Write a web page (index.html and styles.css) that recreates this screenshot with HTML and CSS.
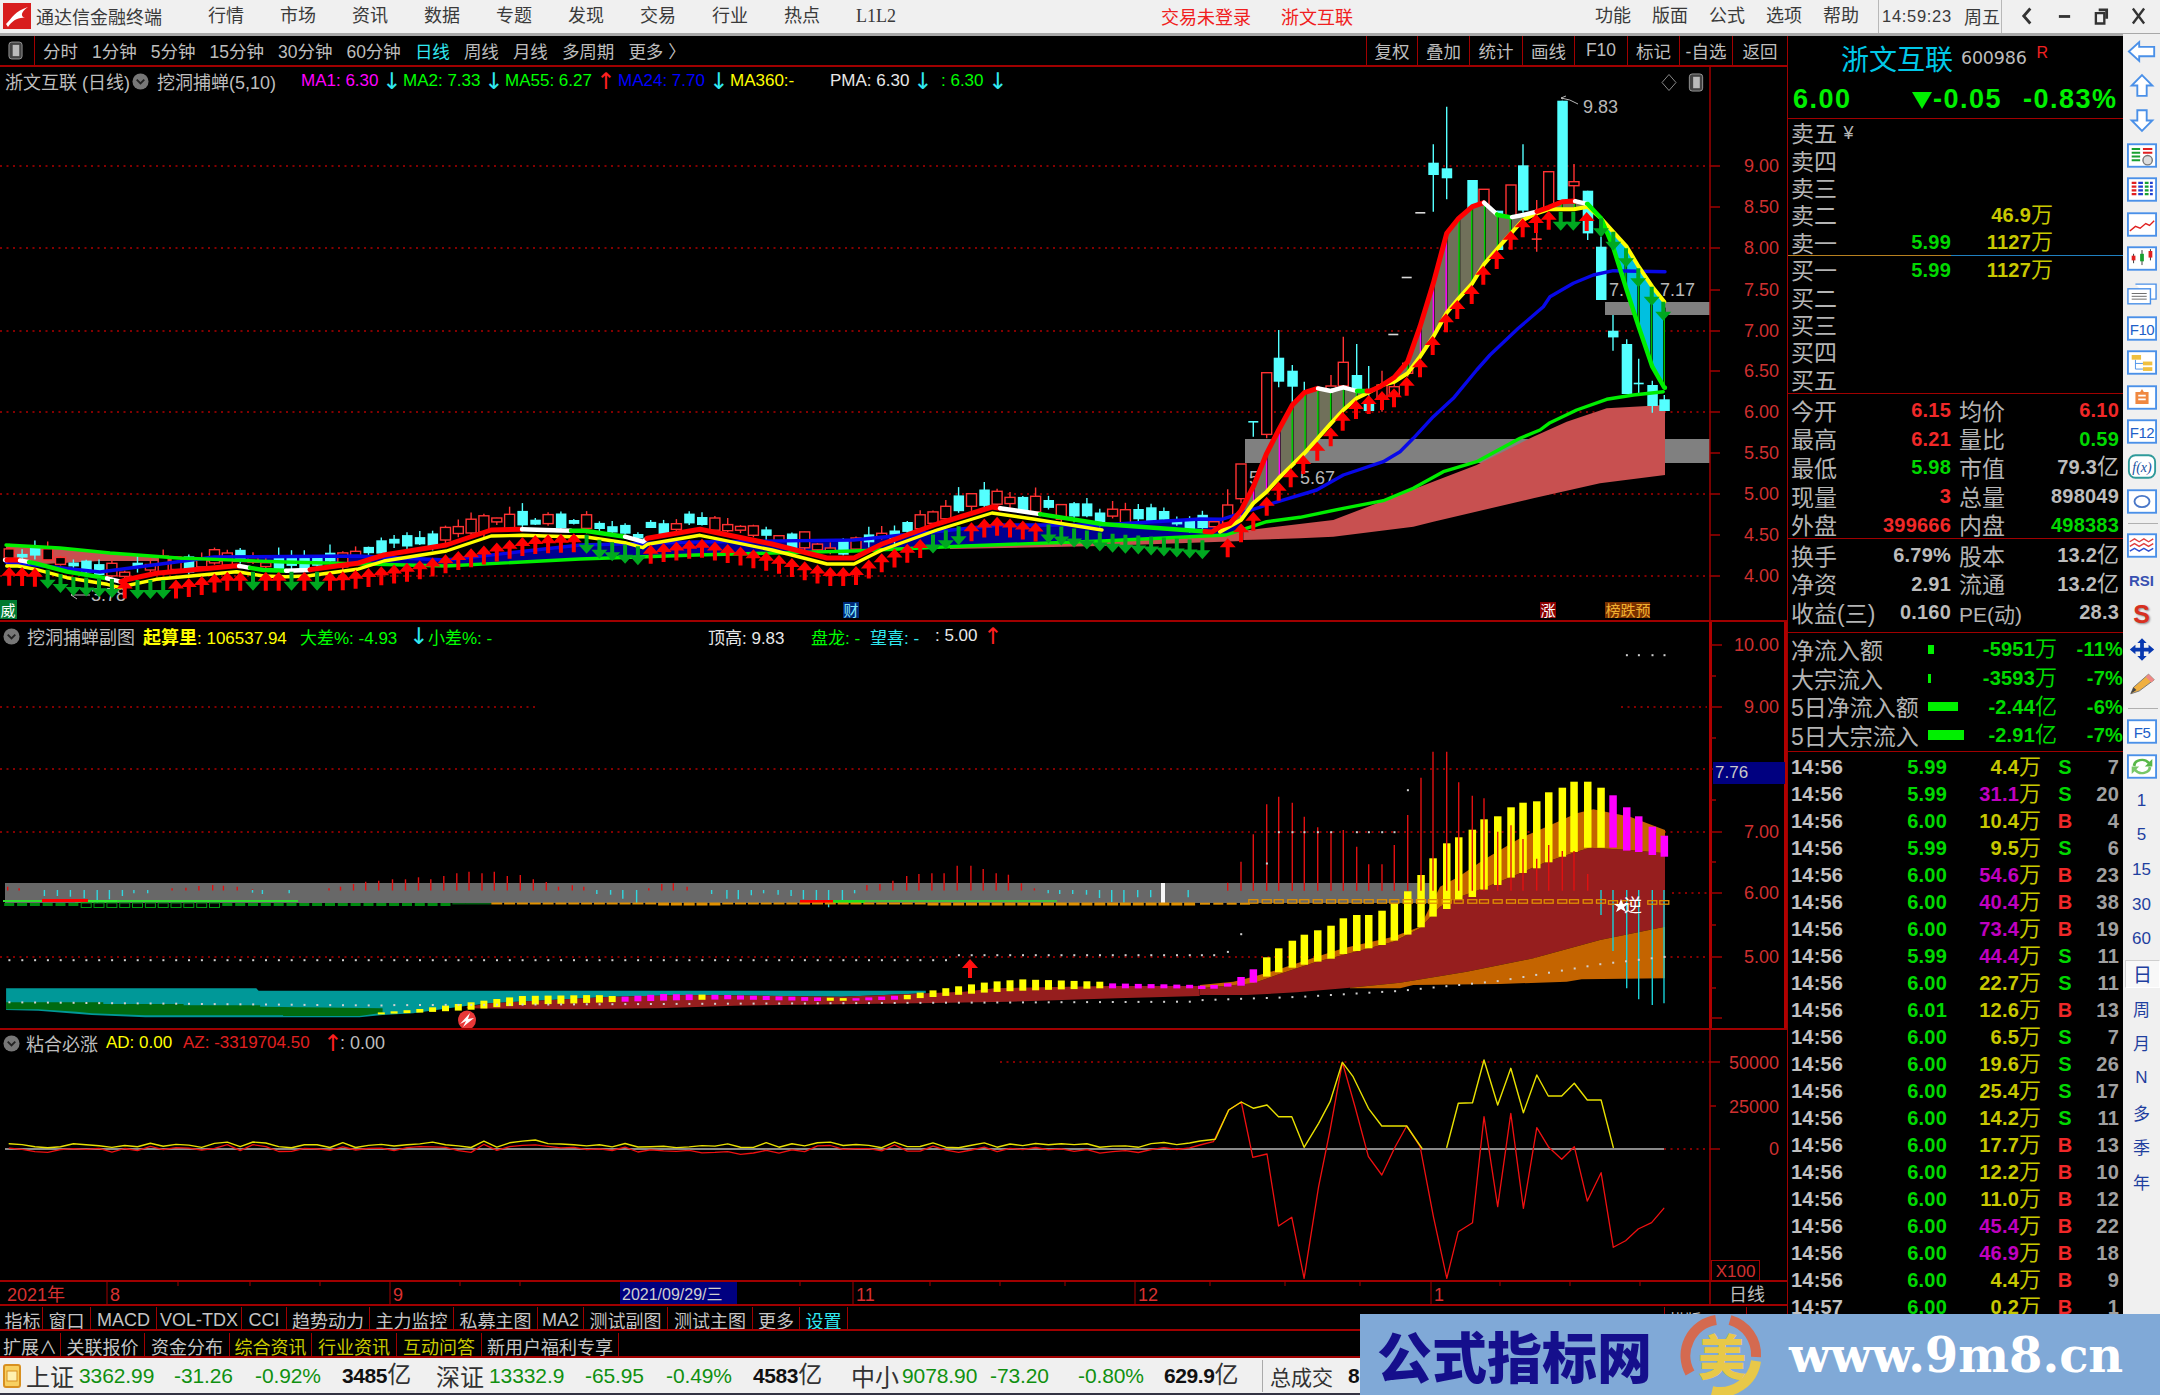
FILE: index.html
```html
<!DOCTYPE html>
<html lang="zh-CN">
<head>
<meta charset="utf-8">
<title>通达信金融终端</title>
<link rel="stylesheet" href="styles.css">
</head>
<body>
<div class="app">
  <header class="menubar">
    <svg class="app-logo" viewBox="0 0 28 26"><rect width="28" height="26" fill="#d81e1e"/><path d="M3 21 C9 15 12 8 25 4 C18 9 17 13 22 15 C15 14 9 18 5 24Z" fill="#fff"/></svg>
    <span class="app-name">通达信金融终端</span>
    <nav class="menu">
      <span>行情</span><span>市场</span><span>资讯</span><span>数据</span><span>专题</span><span>发现</span><span>交易</span><span>行业</span><span>热点</span><span class="l1l2">L1L2</span>
    </nav>
    <span class="alert alert-first">交易未登录</span>
    <span class="alert alert-second">浙文互联</span>
    <nav class="menu menu-right">
      <span>功能</span><span>版面</span><span>公式</span><span>选项</span><span>帮助</span>
    </nav>
    <div class="clock"><span class="clock-time">14:59:23</span><span>周五</span></div>
    <div class="winbtns">
      <svg viewBox="0 0 16 20"><path d="M11 2 L4 10 L11 18" fill="none" stroke="#333" stroke-width="3"/></svg>
      <svg viewBox="0 0 16 20"><rect x="2" y="9" width="12" height="3" fill="#333"/></svg>
      <svg viewBox="0 0 16 20"><path d="M5 2h10v11h-3V5H5z" fill="#333"/><path d="M2 7h9v11H2z" fill="none" stroke="#333" stroke-width="2.5"/></svg>
      <svg viewBox="0 0 16 20"><path d="M2 2 L14 18 M14 2 L2 18" stroke="#333" stroke-width="2.5"/></svg>
    </div>
  </header>

  <div class="workspace">
    <section class="charts">
      <div class="toolbar">
        <div class="tb-icon"><svg viewBox="0 0 16 20"><rect x="1" y="1" width="14" height="18" rx="3" fill="#444" stroke="#999"/><rect x="5" y="4" width="7" height="12" fill="#bbb"/></svg></div>
        <div class="periods">
          <span>分时</span><span>1分钟</span><span>5分钟</span><span>15分钟</span><span>30分钟</span><span>60分钟</span><span class="on">日线</span><span>周线</span><span>月线</span><span>多周期</span><span>更多 〉</span>
        </div>
        <div class="tools">
          <span>复权</span><span>叠加</span><span>统计</span><span>画线</span><span>F10</span><span>标记</span><span>-自选</span><span>返回</span>
        </div>
      </div>

      <div class="pane pane-main">
        <svg id="svg-main" class="chart" width="1787" height="553" viewBox="0 67 1787 553"></svg>
        <div class="legend legend-main">
          <span class="c-gray">浙文互联 (日线)</span>
          <svg class="chev" viewBox="0 0 18 18"><circle cx="9" cy="9" r="8.5" fill="#777"/><path d="M5 7 L9 11 L13 7" fill="none" stroke="#222" stroke-width="2"/></svg>
          <span class="c-gray">挖洞捕蝉(5,10)</span>
          <span class="c-mag">MA1: 6.30</span><i class="c-cyan">↓</i>
          <span class="c-green">MA2: 7.33</span><i class="c-cyan">↓</i>
          <span class="c-green">MA55: 6.27</span><i class="c-red">↑</i>
          <span class="c-blue">MA24: 7.70</span><i class="c-cyan">↓</i>
          <span class="c-yellow">MA360:-</span>
          <span class="c-white">PMA: 6.30</span><i class="c-cyan">↓</i>
          <span class="c-green">: 6.30</span><i class="c-cyan">↓</i>
        </div>
        <div class="corner-marks">
          <svg viewBox="0 0 16 18" class="mark"><path d="M8 1 L15 9 L8 17 L1 9Z" fill="none" stroke="#888"/></svg>
          <svg viewBox="0 0 16 20" class="mark"><rect x="1" y="1" width="14" height="18" rx="3" fill="#444" stroke="#999"/><rect x="5" y="4" width="7" height="12" fill="#bbb"/></svg>
        </div>
      </div>

      <div class="pane pane-sub1">
        <svg id="svg-sub1" class="chart" width="1787" height="406" viewBox="0 622 1787 406"></svg>
        <div class="legend legend-sub1">
          <svg class="chev" viewBox="0 0 18 18"><circle cx="9" cy="9" r="8.5" fill="#777"/><path d="M5 7 L9 11 L13 7" fill="none" stroke="#222" stroke-width="2"/></svg>
          <span class="c-gray">挖洞捕蝉副图</span>
          <span class="c-yellow"><b>起算里</b>: 106537.94</span>
          <span class="c-green">大差%: -4.93</span><i class="c-cyan">↓</i>
          <span class="c-green">小差%: -</span>
          <span class="c-white">顶高: 9.83</span>
          <span class="c-green">盘龙: -</span>
          <span class="c-cyan">望喜: -</span>
          <span class="c-white">: 5.00</span><i class="c-red">↑</i>
        </div>
        <div class="price-tag">7.76</div>
      </div>

      <div class="pane pane-sub2">
        <svg id="svg-sub2" class="chart" width="1787" height="250" viewBox="0 1030 1787 250"></svg>
        <div class="legend legend-sub2">
          <svg class="chev" viewBox="0 0 18 18"><circle cx="9" cy="9" r="8.5" fill="#777"/><path d="M5 7 L9 11 L13 7" fill="none" stroke="#222" stroke-width="2"/></svg>
          <span class="c-gray">粘合必涨</span>
          <span class="c-yellow">AD: 0.00</span>
          <span class="c-redtext">AZ: -3319704.50</span><i class="c-red">↑</i>
          <span class="c-gray">: 0.00</span>
        </div>
        <div class="x100">X100</div>
      </div>

      <div class="timeaxis">
        <svg id="svg-time" class="chart" width="1787" height="22" viewBox="0 1283 1787 22"></svg>
      </div>

      <div class="btnrow btnrow-a">
        <span class="pad"></span>
        <span>指标</span><span>窗口</span><span>MACD</span><span>VOL-TDX</span><span>CCI</span><span>趋势动力</span><span>主力监控</span><span>私募主图</span><span>MA2</span><span>测试副图</span><span>测试主图</span><span>更多</span><span class="c-cyan">设置</span>
        <span class="gapcell"></span>
        <span class="cell-hidden">横版</span>
      </div>
      <div class="btnrow btnrow-b">
        <span>扩展∧</span><span>关联报价</span><span>资金分布</span><span class="c-olive">综合资讯</span><span class="c-olive">行业资讯</span><span class="c-olive">互动问答</span><span>新用户福利专享</span>
      </div>
    </section>

    <aside class="quote">
      <div class="q-title">
        <span class="q-name">浙文互联</span><span class="q-code">600986</span><sup class="q-r">R</sup>
      </div>
      <div class="q-price">
        <span class="q-last">6.00</span><span class="q-tri"></span><span class="q-chg">-0.05</span><span class="q-pct">-0.83%</span>
      </div>

      <div class="book book-ask">
        <div class="brow"><span class="cjk">卖五 <em>¥</em></span><span></span><span></span></div>
        <div class="brow"><span class="cjk">卖四</span><span></span><span></span></div>
        <div class="brow"><span class="cjk">卖三</span><span></span><span></span></div>
        <div class="brow"><span class="cjk">卖二</span><span></span><span class="num c-qty">46.9<u>万</u></span></div>
        <div class="brow"><span class="cjk">卖一</span><span class="num c-up">5.99</span><span class="num c-qty">1127<u>万</u></span></div>
      </div>
      <div class="book-split"></div>
      <div class="book book-bid">
        <div class="brow"><span class="cjk">买一</span><span class="num c-up">5.99</span><span class="num c-qty">1127<u>万</u></span></div>
        <div class="brow"><span class="cjk">买二</span><span></span><span></span></div>
        <div class="brow"><span class="cjk">买三</span><span></span><span></span></div>
        <div class="brow"><span class="cjk">买四</span><span></span><span></span></div>
        <div class="brow"><span class="cjk">买五</span><span></span><span></span></div>
      </div>

      <div class="stats stats-a">
        <div class="srow"><div><span class="cjk">今开</span><span class="num c-dn">6.15</span></div><div><span class="cjk">均价</span><span class="num c-dn">6.10</span></div></div>
        <div class="srow"><div><span class="cjk">最高</span><span class="num c-dn">6.21</span></div><div><span class="cjk">量比</span><span class="num c-up">0.59</span></div></div>
        <div class="srow"><div><span class="cjk">最低</span><span class="num c-up">5.98</span></div><div><span class="cjk">市值</span><span class="num c-txt">79.3<u>亿</u></span></div></div>
        <div class="srow"><div><span class="cjk">现量</span><span class="num c-dn">3</span></div><div><span class="cjk">总量</span><span class="num c-txt">898049</span></div></div>
        <div class="srow"><div><span class="cjk">外盘</span><span class="num c-dn">399666</span></div><div><span class="cjk">内盘</span><span class="num c-up">498383</span></div></div>
      </div>
      <div class="stats stats-b">
        <div class="srow"><div><span class="cjk">换手</span><span class="num c-txt">6.79%</span></div><div><span class="cjk">股本</span><span class="num c-txt">13.2<u>亿</u></span></div></div>
        <div class="srow"><div><span class="cjk">净资</span><span class="num c-txt">2.91</span></div><div><span class="cjk">流通</span><span class="num c-txt">13.2<u>亿</u></span></div></div>
        <div class="srow"><div><span class="cjk">收益(三)</span><span class="num c-txt">0.160</span></div><div><span class="cjk cjk-pe">PE(动)</span><span class="num c-txt">28.3</span></div></div>
      </div>

      <div class="flows">
        <div class="frow"><span class="cjk">净流入额</span><i class="fbar fbar-a"></i><span class="num c-up">-5951<u>万</u></span><span class="num c-up">-11%</span></div>
        <div class="frow"><span class="cjk">大宗流入</span><i class="fbar fbar-b"></i><span class="num c-up">-3593<u>万</u></span><span class="num c-up">-7%</span></div>
        <div class="frow"><span class="cjk">5日净流入额</span><i class="fbar fbar-c"></i><span class="num c-up">-2.44<u>亿</u></span><span class="num c-up">-6%</span></div>
        <div class="frow"><span class="cjk">5日大宗流入</span><i class="fbar fbar-d"></i><span class="num c-up">-2.91<u>亿</u></span><span class="num c-up">-7%</span></div>
      </div>

      <div class="trades">
        <div class="trow"><span>14:56</span><span class="c-up">5.99</span><span class="c-qty">4.4<u>万</u></span><span class="c-up">S</span><span class="c-cnt">7</span></div>
        <div class="trow"><span>14:56</span><span class="c-up">5.99</span><span class="c-big">31.1<u class="c-qty">万</u></span><span class="c-up">S</span><span class="c-cnt">20</span></div>
        <div class="trow"><span>14:56</span><span class="c-up">6.00</span><span class="c-qty">10.4<u>万</u></span><span class="c-dn">B</span><span class="c-cnt">4</span></div>
        <div class="trow"><span>14:56</span><span class="c-up">5.99</span><span class="c-qty">9.5<u>万</u></span><span class="c-up">S</span><span class="c-cnt">6</span></div>
        <div class="trow"><span>14:56</span><span class="c-up">6.00</span><span class="c-big">54.6<u class="c-qty">万</u></span><span class="c-dn">B</span><span class="c-cnt">23</span></div>
        <div class="trow"><span>14:56</span><span class="c-up">6.00</span><span class="c-big">40.4<u class="c-qty">万</u></span><span class="c-dn">B</span><span class="c-cnt">38</span></div>
        <div class="trow"><span>14:56</span><span class="c-up">6.00</span><span class="c-big">73.4<u class="c-qty">万</u></span><span class="c-dn">B</span><span class="c-cnt">19</span></div>
        <div class="trow"><span>14:56</span><span class="c-up">5.99</span><span class="c-big">44.4<u class="c-qty">万</u></span><span class="c-up">S</span><span class="c-cnt">11</span></div>
        <div class="trow"><span>14:56</span><span class="c-up">6.00</span><span class="c-qty">22.7<u>万</u></span><span class="c-up">S</span><span class="c-cnt">11</span></div>
        <div class="trow"><span>14:56</span><span class="c-up">6.01</span><span class="c-qty">12.6<u>万</u></span><span class="c-dn">B</span><span class="c-cnt">13</span></div>
        <div class="trow"><span>14:56</span><span class="c-up">6.00</span><span class="c-qty">6.5<u>万</u></span><span class="c-up">S</span><span class="c-cnt">7</span></div>
        <div class="trow"><span>14:56</span><span class="c-up">6.00</span><span class="c-qty">19.6<u>万</u></span><span class="c-up">S</span><span class="c-cnt">26</span></div>
        <div class="trow"><span>14:56</span><span class="c-up">6.00</span><span class="c-qty">25.4<u>万</u></span><span class="c-up">S</span><span class="c-cnt">17</span></div>
        <div class="trow"><span>14:56</span><span class="c-up">6.00</span><span class="c-qty">14.2<u>万</u></span><span class="c-up">S</span><span class="c-cnt">11</span></div>
        <div class="trow"><span>14:56</span><span class="c-up">6.00</span><span class="c-qty">17.7<u>万</u></span><span class="c-dn">B</span><span class="c-cnt">13</span></div>
        <div class="trow"><span>14:56</span><span class="c-up">6.00</span><span class="c-qty">12.2<u>万</u></span><span class="c-dn">B</span><span class="c-cnt">10</span></div>
        <div class="trow"><span>14:56</span><span class="c-up">6.00</span><span class="c-qty">11.0<u>万</u></span><span class="c-dn">B</span><span class="c-cnt">12</span></div>
        <div class="trow"><span>14:56</span><span class="c-up">6.00</span><span class="c-big">45.4<u class="c-qty">万</u></span><span class="c-dn">B</span><span class="c-cnt">22</span></div>
        <div class="trow"><span>14:56</span><span class="c-up">6.00</span><span class="c-big">46.9<u class="c-qty">万</u></span><span class="c-dn">B</span><span class="c-cnt">18</span></div>
        <div class="trow"><span>14:56</span><span class="c-up">6.00</span><span class="c-qty">4.4<u>万</u></span><span class="c-dn">B</span><span class="c-cnt">9</span></div>
        <div class="trow"><span>14:57</span><span class="c-up">6.00</span><span class="c-qty">0.2<u>万</u></span><span class="c-dn">B</span><span class="c-cnt">1</span></div>
      </div>
    </aside>

    <aside class="side">
      <div class="si"><svg viewBox="0 0 32 26"><path d="M2 13 L13 3 V8 H29 V18 H13 V23Z" fill="#fff" stroke="#4a90e8" stroke-width="2"/></svg></div>
      <div class="si"><svg viewBox="0 0 32 26"><path d="M16 2 L27 13 H21 V24 H11 V13 H5Z" fill="#fff" stroke="#4a90e8" stroke-width="2"/></svg></div>
      <div class="si"><svg viewBox="0 0 32 26"><path d="M16 24 L27 13 H21 V2 H11 V13 H5Z" fill="#fff" stroke="#4a90e8" stroke-width="2"/></svg></div>
      <div class="si"><svg viewBox="0 0 32 26"><rect x="1" y="1" width="30" height="24" fill="#fff" stroke="#4a90e8" stroke-width="2"/><path d="M5 6h9M5 10h9M5 14h9M5 18h9" stroke="#18a030" stroke-width="2"/><path d="M17 6h10M17 10h10" stroke="#e02020" stroke-width="2"/><circle cx="22" cy="18" r="5" fill="#ddd" stroke="#777" stroke-width="1.5"/></svg></div>
      <div class="si"><svg viewBox="0 0 32 26"><rect x="1" y="1" width="30" height="24" fill="#fff" stroke="#4a90e8" stroke-width="2"/><path d="M5 6h5M5 10h5M5 14h5M5 18h5" stroke="#e02020" stroke-width="2.5"/><path d="M12 6h5M12 10h5M12 14h5M12 18h5" stroke="#2040d0" stroke-width="2.5"/><path d="M19 6h4M19 10h4M19 14h4M19 18h4" stroke="#18a030" stroke-width="2.5"/><path d="M24.500 6h3M24.500 10h3M24.500 14h3M24.500 18h3" stroke="#2040d0" stroke-width="2.5"/></svg></div>
      <div class="si"><svg viewBox="0 0 32 26"><rect x="1" y="1" width="30" height="24" fill="#fff" stroke="#4a90e8" stroke-width="2"/><path d="M3 20 L9 15 L14 17 L20 12 L24 14 L29 9" fill="none" stroke="#e02020" stroke-width="1.5"/></svg></div>
      <div class="si"><svg viewBox="0 0 32 26"><rect x="1" y="1" width="30" height="24" fill="#fff" stroke="#4a90e8" stroke-width="2"/><path d="M7 8v10M16 4v16M25 3v12" stroke="#333"/><rect x="5" y="10" width="4" height="5" fill="#e02020"/><rect x="14" y="8" width="4" height="8" fill="#18a030"/><rect x="23" y="5" width="4" height="7" fill="#e02020"/></svg></div>
      <div class="si"><svg viewBox="0 0 32 26"><path d="M9 3h22v16h-6" fill="#fff" stroke="#4a90e8" stroke-width="1.500"/><rect x="1" y="8" width="24" height="16" fill="#fff" stroke="#4a90e8" stroke-width="1.500"/><path d="M5 13h16M5 16h16M5 19h16" stroke="#666"/></svg></div>
      <div class="si"><svg viewBox="0 0 32 26"><rect x="1" y="1" width="30" height="24" fill="#fff" stroke="#4a90e8" stroke-width="2"/><text x="16" y="20" class="ic-f">F10</text></svg></div>
      <div class="si"><svg viewBox="0 0 32 26"><rect x="1" y="1" width="30" height="24" fill="#fff" stroke="#4a90e8" stroke-width="2"/><path d="M9 10v10h8M9 14h8" stroke="#4a90e8" fill="none"/><rect x="5" y="5" width="10" height="5" fill="#f0c040"/><rect x="17" y="12" width="10" height="4" fill="#f0c040"/><rect x="17" y="18" width="10" height="4" fill="#f0c040"/></svg></div>
      <div class="si"><svg viewBox="0 0 32 26"><rect x="1" y="1" width="30" height="24" fill="#fff" stroke="#4a90e8" stroke-width="2"/><path d="M9 7h5l2-3 2 3h5v13H9z" fill="#f08840"/><path d="M12 11h8M12 15h8" stroke="#fff" stroke-width="2"/></svg></div>
      <div class="si"><svg viewBox="0 0 32 26"><rect x="1" y="1" width="30" height="24" fill="#fff" stroke="#4a90e8" stroke-width="2"/><text x="16" y="20" class="ic-f">F12</text></svg></div>
      <div class="si"><svg viewBox="0 0 32 26"><rect x="2" y="1" width="28" height="24" rx="7" fill="#fff" stroke="#2f9a9a" stroke-width="2"/><text x="16" y="19" class="ic-fx">f(x)</text></svg></div>
      <div class="si"><svg viewBox="0 0 32 26"><rect x="1" y="1" width="30" height="24" fill="#fff" stroke="#4a90e8" stroke-width="2"/><ellipse cx="16" cy="13" rx="8" ry="6" fill="none" stroke="#4a78c8" stroke-width="2"/></svg></div>
      <div class="side-sep sep-a"></div>
      <div class="si"><svg viewBox="0 0 32 26"><rect x="1" y="1" width="30" height="24" fill="#fff" stroke="#4a90e8" stroke-width="2"/><path d="M3 9l5-3 5 3 5-3 5 3 5-3M3 14l5-3 5 3 5-3 5 3 5-3" fill="none" stroke="#e04040" stroke-width="1.500"/><path d="M3 19l5-3 5 3 5-3 5 3 5-3" fill="none" stroke="#3050d0" stroke-width="1.500"/></svg></div>
      <div class="si si-rsi">RSI</div>
      <div class="si si-s">S</div>
      <div class="si"><svg viewBox="0 0 32 26"><path d="M16 1 L21 6 H18 V11 H23 V8 L29 13 L23 18 V15 H18 V20 H21 L16 25 L11 20 H14 V15 H9 V18 L3 13 L9 8 V11 H14 V6 H11Z" fill="#0838b0"/></svg></div>
      <div class="si"><svg viewBox="0 0 32 26"><path d="M4 24 L7 17 L23 3 L29 9 L13 21Z" fill="#f0b040" stroke="#777"/><path d="M23 3 L29 9 L26 12 L20 6Z" fill="#e88"/><path d="M4 24 L7 17 L10 20Z" fill="#444"/></svg></div>
      <div class="side-sep sep-b"></div>
      <div class="si"><svg viewBox="0 0 32 26"><rect x="1" y="1" width="30" height="24" fill="#fff" stroke="#4a90e8" stroke-width="2"/><text x="16" y="20" class="ic-f">F5</text></svg></div>
      <div class="si"><svg viewBox="0 0 32 26"><rect x="1" y="1" width="30" height="24" fill="#fff" stroke="#4a90e8" stroke-width="2"/><path d="M6 12 A10 8 0 0 1 24 8 L27 5 V13 H19 L22 10 A7 6 0 0 0 9 13Z" fill="#58b848"/><path d="M26 14 A10 8 0 0 1 8 18 L5 21 V13 H13 L10 16 A7 6 0 0 0 23 13Z" fill="#78c868"/></svg></div>
      <div class="si si-t">1</div>
      <div class="si si-t">5</div>
      <div class="si si-t">15</div>
      <div class="si si-t">30</div>
      <div class="si si-t">60</div>
      <div class="si si-t si-on">日</div>
      <div class="si si-t">周</div>
      <div class="si si-t">月</div>
      <div class="si si-t">N</div>
      <div class="si si-t">多</div>
      <div class="si si-t">季</div>
      <div class="si si-t">年</div>
    </aside>
  </div>

  <footer class="statusbar">
    <svg class="st-ic" viewBox="0 0 18 24"><rect x="1" y="1" width="16" height="22" rx="2" fill="#f8d060" stroke="#d89020" stroke-width="2"/><rect x="4" y="7" width="10" height="10" fill="#fff0b0" stroke="#d89020"/></svg>
    <span class="st-name">上证</span><span class="st-g">3362.99</span><span class="st-g">-31.26</span><span class="st-g">-0.92%</span><span class="st-v">3485<u>亿</u></span>
    <span class="st-name">深证</span><span class="st-g">13332.9</span><span class="st-g">-65.95</span><span class="st-g">-0.49%</span><span class="st-v">4583<u>亿</u></span>
    <span class="st-name">中小</span><span class="st-g">9078.90</span><span class="st-g">-73.20</span><span class="st-g">-0.80%</span><span class="st-v">629.9<u>亿</u></span>
    <span class="st-sep"></span>
    <span class="st-name st-total">总成交</span><span class="st-v">8</span>
  </footer>

  <div class="watermark">
    <span class="wm-cn">公式指标网</span>
    <svg class="wm-logo" viewBox="0 0 84 84">
      <path d="M10 60 A36 36 0 0 1 36 7" fill="none" stroke="#d46a50" stroke-width="10"/>
      <path d="M50 7 A36 36 0 0 1 76 44" fill="none" stroke="#d46a50" stroke-width="10"/>
      <path d="M76 48 A36 36 0 0 1 32 78" fill="none" stroke="#e8c848" stroke-width="10"/>
      <text x="42" y="62" class="wm-glyph">美</text>
    </svg>
    <span class="wm-url">www.9m8.cn</span>
  </div>
</div>
<script src="charts.js"></script>
</body>
</html>
```
FILE: styles.css
```css
* { box-sizing: border-box; }
html, body { margin: 0; padding: 0; background: #000; }
body { font-family: "Liberation Sans", "Noto Sans CJK SC", sans-serif; }
.app { position: relative; width: 2160px; height: 1395px; overflow: hidden; display: flex; flex-direction: column; }

/* top menu */
.menubar { height: 36px; flex: none; background: #f0f0f0; border-bottom: 3px solid #a8a8a8; display: flex; align-items: center; font-size: 18px; color: #3a3a3a; white-space: nowrap; padding-bottom: 1px; }
.app-logo { width: 28px; height: 26px; margin-left: 3px; flex: none; }
.app-name { margin-left: 5px; width: 126px; }
.menu { display: flex; gap: 36px; margin-left: 46px; }
.menu span { width: 36px; line-height: 24px; }
.menu .l1l2 { font-family: "Liberation Serif", serif; }
.alert { color: #f02020; }
.alert-first { margin-left: 269px; }
.alert-second { margin-left: 30px; }
.menu-right { margin-left: 242px; gap: 21px; }
.clock { margin-left: 19px; height: 33px; width: 124px; border-left: 1px solid #b8b8b8; border-right: 1px solid #b8b8b8; display: flex; align-items: center; padding-left: 3px; gap: 8px; }
.clock-time { font-family: "Liberation Sans", sans-serif; font-size: 16.500px; letter-spacing: .7px; width: 74px; }
.winbtns { display: flex; gap: 22px; margin-left: 18px; }
.winbtns svg { width: 15px; height: 20px; display: block; }

.workspace { flex: none; height: 1322px; display: flex; }
.charts { width: 1787px; flex: none; display: flex; flex-direction: column; background: #000; }

/* period toolbar */
.toolbar { height: 31px; flex: none; border-bottom: 2px solid #a00000; display: flex; align-items: center; color: #bdbdbd; font-size: 17.500px; white-space: nowrap; }
.tb-icon { width: 35px; height: 29px; border-right: 1px solid #a00000; display: flex; align-items: center; padding-left: 8px; }
.tb-icon svg { width: 15px; height: 19px; }
.periods { display: flex; gap: 14px; margin-left: 8px; }
.periods .on { color: #30e8f0; }
.tools { margin-left: auto; display: grid; grid-template-columns: 51px 52px 53px 52px 53px 52px 53px 55px; height: 29px; }
.tools span { border-left: 1px solid #a00000; display: flex; align-items: center; justify-content: center; }

/* chart panes */
.pane { position: relative; flex: none; }
.chart { display: block; }
.chart text { font-family: "Liberation Sans", "Noto Sans CJK SC", sans-serif; }
.pane-main { height: 555px; border-bottom: 2px solid #a00000; }
.pane-sub1 { height: 408px; border-bottom: 2px solid #a00000; }
.pane-sub2 { height: 252px; border-bottom: 2px solid #a00000; }
.timeaxis { height: 24px; flex: none; border-bottom: 2px solid #a00000; }
.ax { fill: #d03030; font-size: 18px; text-anchor: end; }
.lbl { fill: #b8b8b8; font-size: 18px; }
.tm { fill: #d83030; font-size: 18px; }
.tm-sel { fill: #d0d0d0; font-size: 16px; }
.tm-day { fill: #bdbdbd; font-size: 18px; }
.tag { font-size: 15px; text-anchor: middle; }
.tag-w { fill: #fff; }
.tag-c { fill: #80e8ff; }
.tag-o { fill: #f0b030; }

.legend { position: absolute; left: 0; display: grid; align-items: center; font-size: 17px; height: 24px; white-space: nowrap; }
.legend i { font-family: "DejaVu Sans", sans-serif; font-style: normal; font-size: 23px; line-height: 24px; margin-left: -4px; }
.legend b { font-weight: 700; font-size: 18px; }
.legend .c-gray { font-size: 18px; }
.legend-main { top: 1px; padding-left: 5px; grid-template-columns: 127px 25px 144px 85px 17px 85px 17px 95px 18px 95px 17px 100px 87px 24px 51px 20px; }
.legend-sub1 { top: 1px; padding-left: 3px; grid-template-columns: 24px 116px 157px 113px 15px 280px 103px 59px 65px 52px 20px; }
.legend-sub2 { top: 0; padding-left: 3px; grid-template-columns: 23px 80px 77px 144px 13px 80px; }
.chev { width: 17px; height: 17px; display: block; }
.corner-marks { position: absolute; top: 6px; left: 1661px; display: flex; gap: 11px; align-items: center; }
.mark { width: 16px; height: 19px; display: block; }
.price-tag { position: absolute; left: 1713px; top: 140px; width: 72px; height: 22px; background: #000080; color: #c8c8c8; font-size: 17px; line-height: 22px; padding-left: 2px; }
.x100 { position: absolute; left: 1711px; top: 230px; width: 49px; height: 22px; border: 1px solid #a00000; border-bottom: 0; color: #d03030; font-size: 17px; line-height: 22px; text-align: center; }

.c-gray { color: #bdbdbd; }
.c-mag { color: #ff00ff; }
.c-green { color: #00ff00; }
.c-blue { color: #0000ff; }
.c-yellow { color: #ffff00; }
.c-white { color: #e8e8e8; }
.c-cyan { color: #30e8f0; }
.c-red { color: #ff2020; }
.c-redtext { color: #e02020; }
.c-olive { color: #c8c800; }

/* button rows */
.btnrow { flex: none; display: grid; color: #c4c4c4; font-size: 18px; white-space: nowrap; border-bottom: 2px solid #a00000; overflow: hidden; }
.btnrow span { display: flex; align-items: center; justify-content: center; border-right: 1px solid #a00000; }
.btnrow span.c-cyan { color: #30e8f0; }
.btnrow span.c-olive { color: #c8c800; }
.btnrow-a { height: 25px; padding-top: 1px; grid-template-columns: 3px 40px 48px 66px 85px 45px 83px 84px 84px 46px 84px 85px 47px 48px 817px 82px; }
.btnrow-a .pad { border-right: 0; }
.btnrow-a .gapcell { border-right: 1px solid #a00000; }
.btnrow-a .cell-hidden { justify-content: flex-start; padding-left: 4px; font-size: 16px; align-items: flex-start; }
.btnrow-b { height: 27px; padding-top: 2px; grid-template-columns: 61px 84px 85px 82px 85px 85px 137px; }

/* quote panel */
.quote { width: 336px; flex: none; background: #000; border-left: 1px solid #a00000; color: #bdbdbd; overflow: hidden; }
.q-title { height: 44px; display: flex; align-items: center; padding-left: 53px; white-space: nowrap; }
.q-name { color: #00c8e8; font-size: 28px; width: 120px; }
.q-code { font-family: "DejaVu Sans", sans-serif; font-size: 17.500px; letter-spacing: -.2px; }
.q-r { color: #f02020; font-size: 16px; margin: -10px 0 0 10px; }
.q-price { height: 39px; border-bottom: 1px solid #a00000; display: flex; align-items: center; color: #00f000; font-weight: 700; font-size: 27px; letter-spacing: 1.500px; padding-left: 5px; white-space: nowrap; }
.q-last { width: 119px; }
.q-tri { width: 0; height: 0; border-left: 10px solid transparent; border-right: 10px solid transparent; border-top: 17px solid #00f000; margin-top: 2px; }
.q-chg { width: 90px; margin-left: 1px; }
.book { padding: 0 3px; }
.book-ask { height: 136px; }
.book-bid { height: 138px; border-bottom: 1px solid #a00000; }
.book-split { height: 1px; background: linear-gradient(90deg, #b88020 0 163px, #2080c0 163px); }
.brow { height: 27.400px; display: grid; grid-template-columns: 60px 100px 102px; align-items: center; }
.cjk { font-size: 23px; color: #b4b4b4; font-weight: 400; white-space: nowrap; line-height: 1; padding-top: 4px; }
.cjk em { font-style: normal; font-size: 18px; vertical-align: 3px; }
.cjk-pe { font-size: 21px; }
.num { font-weight: 700; font-size: 20px; letter-spacing: .2px; text-align: right; white-space: nowrap; line-height: 1; }
u { text-decoration: none; font-weight: 400; font-size: 22px; letter-spacing: 0; line-height: 0; }
.c-up { color: #00d800; }
.c-dn { color: #f02828; }
.c-qty { color: #c8c800; }
.c-big { color: #c000c0; }
.c-txt { color: #bcbcbc; }
.c-cnt { color: #a0a0a0; }
.stats { padding: 2px 3px 0; border-bottom: 1px solid #a00000; }
.stats-a { height: 145px; }
.stats-b { height: 94px; }
.srow { height: 28.600px; display: grid; grid-template-columns: 160px 160px; column-gap: 8px; align-items: center; }
.srow > div { display: flex; justify-content: space-between; align-items: center; }
.flows { height: 119px; padding: 2px 3px 0; border-bottom: 1px solid #a00000; }
.frow { height: 28.700px; display: grid; grid-template-columns: 137px 70px 59px 66px; align-items: center; }
.frow .cjk { white-space: nowrap; width: 137px; }
.fbar { display: block; height: 9px; background: #00f000; justify-self: start; }
.fbar-a { width: 6px; }
.fbar-b { width: 3px; }
.fbar-c { width: 30px; }
.fbar-d { width: 36px; height: 10px; }
.frow .num:nth-of-type(2) { margin-left: -30px; }
.trades { padding: 1px 0 0 3px; font-weight: 700; font-size: 20px; letter-spacing: .2px; }
.trow { height: 27px; line-height: 22px; display: grid; grid-template-columns: 60px 96px 94px 48px 30px; align-items: center; color: #c0c0c0; white-space: nowrap; }
.trow span:nth-child(2), .trow span:nth-child(3), .trow span:nth-child(5) { text-align: right; }
.trow span:nth-child(4) { text-align: center; }

/* right icon strip */
.side { width: 37px; flex: none; background: #f0f0f0; margin-top: -2px; position: relative; }
.si { height: 34.600px; display: flex; align-items: center; justify-content: center; }
.si svg { width: 30px; height: 25px; display: block; }
.side-sep { position: relative; }
.side-sep::after { content: ""; position: absolute; left: 5px; right: 2px; top: 50%; height: 1px; background: #b0b0b0; }
.sep-a { height: 10px; }
.sep-b { height: 13px; }
.ic-f { font-family: "Liberation Sans", sans-serif; font-size: 16px; fill: #2060c8; text-anchor: middle; letter-spacing: -.5px; }
.ic-fx { font-family: "Liberation Serif", serif; font-size: 15px; font-style: italic; fill: #1850a0; text-anchor: middle; }
.si-rsi { color: #3850b0; font-weight: 700; font-size: 15px; }
.si-s { color: #d83020; font-weight: 700; font-size: 25px; text-shadow: 1px 1px 2px #888; }
.si-t { color: #1f3f9f; font-size: 17px; }
.si-on { background: #f8f8f8; border: 1px solid #cfcfcf; border-right-color: #fff; border-bottom-color: #fff; margin-left: 2px; font-size: 19px; height: 28px; margin-top: 3.300px; margin-bottom: 3.300px; }

/* status bar */
.statusbar { height: 37px; flex: none; background: #f0f0f0; border-bottom: 2px solid #334; display: grid; grid-template-columns: 23px 53px 95px 81px 87px 94px 53px 96px 81px 87px 98px 51px 88px 88px 86px 98px 8px 78px 90px; align-items: center; padding-left: 3px; color: #111; white-space: nowrap; }
.st-ic { width: 18px; height: 24px; display: block; }
.st-name { font-size: 24px; color: #333; }
.st-total { font-size: 21px; }
.st-g { color: #109010; font-size: 21px; letter-spacing: -.1px; }
.st-v { color: #111; font-size: 21px; font-weight: 700; letter-spacing: -.4px; }
.st-v u { font-size: 24px; color: #333; }
.st-sep { width: 1px; height: 32px; background: #aaa; }

/* watermark over the corner */
.watermark { position: absolute; left: 1360px; top: 1314px; width: 800px; height: 81px; background: #80a9d7; display: flex; align-items: center; white-space: nowrap; }
.wm-cn { margin-left: 17px; width: 284px; font-family: "Noto Sans CJK SC", sans-serif; font-weight: 900; font-size: 55px; color: #150f8c; line-height: 1; }
.wm-logo { width: 84px; height: 84px; margin-left: 19px; flex: none; }
.wm-glyph { font-family: "Noto Sans CJK SC", sans-serif; font-weight: 900; font-size: 48px; fill: #e8c848; text-anchor: middle; }
.wm-url { margin-left: 25px; font-family: "DejaVu Serif", serif; font-weight: 700; font-size: 48px; color: #fff; line-height: 1; }
```
FILE: charts.js
```js
(function () {
  var Zm = function (x, y) { return [1200 + x / 3, 90 + y / 3]; };
  var Z6 = function (x, y) { return [x / 2.24, 500 + y / 3]; };
  var Z7 = function (x, y) { return [1200 + x / 3, 620 + y / 3]; };
  var Z10 = function (x, y) { return [x / 1.307, 620 + y / 3]; };
  var Z11 = function (x, y) { return [1200 + x / 2.613, 1030 + y / 3]; };
  var id = function (x, y) { return [x, y]; };
  var M = function (f, a) { return a.map(function (p) { return f(p[0], p[1]); }); };
  var pts = function (a) { return a.map(function (p) { return p[0].toFixed(1) + ',' + p[1].toFixed(1); }).join(' '); };
  var pl = function (a, c, w) { return '<polyline points="' + pts(a) + '" fill="none" stroke="' + c + '" stroke-width="' + w + '" stroke-linejoin="round" stroke-linecap="round"/>'; };
  var ar = function (t, b, c) { return '<polygon points="' + pts(t.concat(b.slice().reverse())) + '" fill="' + c + '"/>'; };
  var rc = function (x, y, w, h, c) { return '<rect x="' + x.toFixed(1) + '" y="' + y.toFixed(1) + '" width="' + w + '" height="' + h.toFixed(1) + '" fill="' + c + '"/>'; };
  var hollow = function (x, y, w, h, c, s) { return '<rect x="' + x.toFixed(1) + '" y="' + y.toFixed(1) + '" width="' + w + '" height="' + h.toFixed(1) + '" fill="none" stroke="' + c + '" stroke-width="' + (s || 1.3) + '"/>'; };
  var vl = function (x, a, b, c, w) { return '<line x1="' + x.toFixed(1) + '" x2="' + x.toFixed(1) + '" y1="' + a.toFixed(1) + '" y2="' + b.toFixed(1) + '" stroke="' + c + '" stroke-width="' + (w || 1) + '"/>'; };
  var hl = function (a, b, y, c, w, d) { return '<line x1="' + a + '" x2="' + b + '" y1="' + y + '" y2="' + y + '" stroke="' + c + '" stroke-width="' + (w || 1) + '"' + (d ? ' stroke-dasharray="' + d + '"' : '') + '/>'; };
  var grid = function (a, b, y) { return hl(a, b, y, '#b00000', 1.5, '2 4.5'); };
  var txt = function (x, y, s, cl) { return '<text x="' + x + '" y="' + y + '" class="' + cl + '">' + s + '</text>'; };
  var at = function (a, x) {
    if (x <= a[0][0]) return a[0][1];
    for (var i = 1; i < a.length; i++) {
      if (x <= a[i][0]) { var t = (x - a[i - 1][0]) / (a[i][0] - a[i - 1][0] || 1); return a[i - 1][1] + t * (a[i][1] - a[i - 1][1]); }
    }
    return a[a.length - 1][1];
  };
  var slice = function (a, x1, x2) {
    var r = [[x1, at(a, x1)]];
    a.forEach(function (p) { if (p[0] > x1 && p[0] < x2) r.push(p); });
    r.push([x2, at(a, x2)]);
    return r;
  };
  var seed = 7331;
  var rnd = function () { seed = (seed * 16807) % 2147483647; return (seed % 10000) / 10000; };
  var barX = function (i) { return 1664.3 - (129 - i) * 12.83; };
  var arrow = function (x, y, up, c) {
    var d = up
      ? [[x, y], [x + 8, y + 9], [x + 2, y + 9], [x + 2, y + 19], [x - 2, y + 19], [x - 2, y + 9], [x - 8, y + 9]]
      : [[x - 2, y], [x + 2, y], [x + 2, y + 10], [x + 8, y + 10], [x, y + 19], [x - 8, y + 10], [x - 2, y + 10]];
    return '<polygon points="' + pts(d) + '" fill="' + c + '"/>';
  };

  /* ---------- main pane ---------- */
  var s = '';
  [166, 248, 331, 412, 494, 576].forEach(function (y) { s += grid(0, 1710, y); });
  s += rc(1245, 439, 465, 24, '#808080') + rc(1605, 302, 105, 13, '#808080');

  var green = M(id, [[6, 545], [60, 548], [110, 553], [178, 558], [285, 562], [446, 566], [580, 559], [696, 555], [854, 551], [965, 546], [1102, 541], [1226, 535]])
    .concat(M(Zm, [[130, 1318], [200, 1295], [300, 1282], [430, 1255], [550, 1232], [640, 1195], [730, 1145], [830, 1115], [960, 1045], [1020, 1020], [1050, 998], [1130, 960], [1220, 928], [1300, 915], [1390, 905]]));
  var blue = M(id, [[6, 562], [100, 572], [214, 557], [357, 556], [446, 560], [580, 545], [696, 542], [854, 540], [1000, 525], [1100, 525], [1200, 519]])
    .concat(M(Zm, [[65, 1288], [200, 1245], [350, 1200], [430, 1155], [550, 1115], [600, 1085], [640, 1045], [700, 980], [760, 925], [830, 840], [870, 795], [955, 715], [1030, 650], [1050, 620], [1120, 580], [1180, 555], [1240, 542], [1395, 545]]));

  s += ar(slice(blue, 214, 1240), slice(green, 214, 1240), '#000090');
  s += ar(slice(green, 6, 285), M(id, [[6, 566], [100, 561], [178, 561], [285, 563]]), '#c85050');
  s += ar(slice(green, 950, 1243), M(id, [[950, 549], [1100, 546], [1243, 541]]), '#c85050');
  s += ar(M(Zm, [[130, 1322], [400, 1290], [830, 1125], [1000, 1040], [1100, 995], [1220, 955], [1395, 945]]),
          M(Zm, [[130, 1350], [300, 1345], [400, 1340], [640, 1310], [700, 1295], [1000, 1225], [1200, 1180], [1395, 1155]]), '#c85050');

  var red = M(Z6, [[15, 180], [40, 180], [60, 185], [80, 190], [150, 215], [240, 235], [270, 245], [280, 240], [350, 220], [470, 205], [530, 197], [545, 200], [590, 210], [640, 212], [690, 210], [700, 208], [800, 190], [860, 165], [1000, 135], [1100, 90], [1170, 88], [1220, 90], [1280, 92], [1310, 92], [1400, 110], [1440, 125], [1450, 115], [1568, 88]])
    .concat(M(id, [[772, 544], [827, 558], [854, 558], [882, 544], [937, 524], [992, 507], [1033, 513], [1102, 524], [1212, 532]]))
    .concat(M(Zm, [[60, 1310], [90, 1300], [123, 1262], [160, 1190], [200, 1090], [236, 1020], [277, 945], [313, 908], [353, 895], [393, 903], [430, 892], [470, 903], [510, 903], [540, 890], [583, 862], [623, 815], [660, 710], [700, 580], [740, 430], [776, 385], [817, 350], [852, 338], [893, 375], [933, 382], [969, 375], [1010, 365], [1046, 352], [1087, 335], [1122, 333], [1163, 342], [1203, 385], [1239, 470], [1280, 600], [1316, 710], [1357, 830], [1393, 893]]));
  var yel = red.filter(function (p) { return p[0] < 1205; }).map(function (p) { return [p[0], p[1] + 6]; })
    .concat(M(Zm, [[60, 1325], [123, 1290], [160, 1240], [200, 1205], [236, 1165], [277, 1125], [313, 1090], [353, 1045], [393, 1000], [430, 960], [470, 925], [510, 905], [546, 885], [583, 875], [623, 850], [660, 800], [700, 740], [740, 668], [776, 625], [817, 580], [852, 523], [893, 475], [933, 430], [969, 390], [1010, 370], [1046, 358], [1087, 358], [1122, 358], [1163, 350], [1203, 385], [1239, 425], [1280, 470], [1316, 530], [1357, 590], [1393, 635]]));

  /* candles */
  var bars = [];
  for (var i = 0; i < 130; i++) bars.push(barX(i));
  var candle = function (x, top, bot, hi, lo, kind) {
    var o = '';
    var col = kind === 'c' ? '#54ffff' : '#ff3232';
    o += vl(x, hi, lo, col, 1.4);
    if (kind === 'c') o += rc(x - 5, top, 10.5, bot - top, col);
    else o += '<rect x="' + (x - 5).toFixed(1) + '" y="' + top.toFixed(1) + '" width="10" height="' + (bot - top).toFixed(1) + '" fill="#000" stroke="' + col + '" stroke-width="1.4"/>';
    return o;
  };
  bars.forEach(function (x) {
    if (x > 1212) return;
    var c = at(red, x) - 3 - rnd() * 9;
    var h = 2 + rnd() * 9;
    var kind = rnd() > 0.5 ? 'c' : 'r';
    s += candle(x, c - h, c + h / 2, c - h - rnd() * 9, c + h / 2 + rnd() * 6, kind);
  });
  var rc2 = [[42, 1295, 1310, 1290, 1312, 'r'], [83, 1245, 1300, 1198, 1310, 'r'], [123, 1122, 1226, 1122, 1240, 'r'], [200, 848, 1033, 848, 1045, 'r'], [236, 803, 875, 720, 892, 'c'], [277, 842, 890, 825, 938, 'c'], [313, 918, 935, 875, 938, 'c'], [353, 918, 948, 895, 960, 'r'], [393, 888, 920, 855, 930, 'r'], [430, 817, 888, 740, 900, 'r'], [470, 855, 905, 762, 910, 'c'], [506, 940, 963, 828, 963, 'c'], [546, 885, 925, 842, 965, 'r'], [583, 890, 915, 880, 925, 'r'], [623, 820, 850, 815, 860, 'r'], [700, 218, 255, 163, 365, 'c'], [740, 235, 265, 50, 328, 'c'], [817, 270, 383, 270, 383, 'c'], [852, 298, 410, 298, 410, 'r'], [893, 362, 480, 362, 480, 'c'], [933, 285, 395, 285, 415, 'r'], [969, 226, 362, 163, 368, 'c'], [1046, 245, 355, 245, 355, 'r'], [1087, 32, 330, 32, 330, 'c'], [1122, 275, 287, 222, 340, 'r'], [1163, 302, 430, 302, 450, 'c'], [1203, 470, 630, 440, 630, 'c'], [1239, 722, 742, 675, 782, 'c'], [1280, 762, 912, 748, 912, 'c'], [1357, 885, 948, 872, 968, 'c'], [1393, 928, 963, 915, 963, 'c']];
  rc2.forEach(function (c) {
    var p = Zm(c[0], c[1]), q = Zm(c[0], c[2]), h = Zm(c[0], c[3]), l = Zm(c[0], c[4]);
    s += candle(p[0], p[1], q[1], h[1], l[1], c[5]);
  });
  // one-price bars and crosses
  [[580, 731], [620, 560], [661, 366]].forEach(function (d) { var p = Zm(d[0], d[1]); s += rc(p[0] - 5, p[1], 10, 1.6, '#d8d8d8'); });
  var cr = function (zx, zy, a, b, c) { var p = Zm(zx, zy); s += rc(p[0] - 5, p[1], 10, 1.6, c) + vl(p[0], Zm(0, a)[1], Zm(0, b)[1], c, 1.4); };
  cr(1010, 445, 330, 485, '#ff3232');
  cr(1316, 878, 806, 910, '#54ffff');
  cr(160, 993, 993, 1040, '#54ffff');

  /* labels beneath the ribbon */
  s += txt(1583, 113, '9.83', 'lbl') + '<path d="M1563 99 L1561 98 L1566 96 M1561 98 Q1570 99 1578 104" fill="none" stroke="#b8b8b8"/>';
  s += txt(1300, 484, '5.67', 'lbl') + txt(1249, 484, '5', 'lbl');
  s += txt(1660, 296, '7.17', 'lbl') + txt(1609, 296, '7.', 'lbl');
  s += '<path d="M71 595 L90 595 M71 595 L77 591 M71 595 L77 599" fill="none" stroke="#b8b8b8"/>' + txt(91, 601, '3.78', 'lbl');

  /* ribbon fills */
  s += ar(slice(red, 1220, 1587), slice(yel, 1220, 1587), '#70705a');
  s += ar(slice(red, 1587, 1664), slice(yel, 1587, 1664), '#00c0e0');
  bars.forEach(function (x) {
    if (x < 1240) return;
    var a = at(red, x), b = at(yel, x);
    if (Math.abs(b - a) < 4) return;
    var z = (x - 1200) * 3;
    var c = (z < 270 || (z > 640 && z < 760)) ? '#ff00ff' : '#00d000';
    if (z > 1250) { s += vl(x, Math.min(a, b) + 6, Math.max(a, b), '#000', 2.6) + vl(x, Math.min(a, b) + 6, Math.max(a, b), '#00c000', 1.4); }
    else { s += vl(x + 0.8, a, b, '#000', 1) + vl(x, a, b, c, 1.5); }
  });

  /* moving averages */
  s += pl(blue, '#0808e8', 3.4);
  s += pl(green, '#00ee00', 3.4);
  s += pl(yel.filter(function (p) { return p[0] < 1205; }), '#ffff00', 3.4);
  s += pl(yel.filter(function (p) { return p[0] >= 1205; }), '#ffff00', 4);
  var cols = [[5, 7, '#fff'], [7, 20, '#ff0000'], [20, 29, '#fff'], [29, 107, '#00ee00'], [107, 121, '#fff'], [121, 239, '#ff0000'], [239, 250, '#fff'], [250, 286, '#00ee00'], [286, 310, '#fff'], [310, 522, '#ff0000'], [522, 571, '#fff'], [571, 625, '#00ee00'], [625, 647, '#fff'], [647, 1000, '#ff0000'], [1000, 1040, '#fff'], [1040, 1205, '#00ee00'], [1205, 1318, '#ff0000'], [1318, 1332, '#fff'], [1332, 1357, '#fff'], [1357, 1367, '#00ee00'], [1367, 1484, '#ff0000'], [1484, 1497, '#fff'], [1497, 1512, '#00ee00'], [1512, 1537, '#fff'], [1537, 1575, '#ff0000'], [1575, 1587, '#fff'], [1587, 1665, '#00ee00']];
  cols.forEach(function (c) { s += pl(slice(red, c[0], c[1]), c[2], c[2] === '#ff0000' ? 5 : 4.4); });

  /* arrows */
  var leftGreen = [97, 127, 155, 185, 215, 245, 300, 330, 358, 560, 645, 703, 1307, 1337, 1367, 1395, 1423, 1565];
  var arrowTop = M(Z6, [[35, 200], [97, 205], [155, 230], [300, 240], [385, 240], [445, 230], [500, 215], [762, 215], [848, 200], [905, 190], [963, 175], [1020, 155], [1105, 130], [1192, 105], [1280, 100], [1307, 100], [1337, 118], [1423, 140], [1568, 115]])
    .concat(M(id, [[772, 553], [827, 567], [854, 567], [882, 553], [937, 533], [992, 516], [1033, 522], [1102, 533], [1212, 541]]));
  bars.forEach(function (x) {
    if (x > 1212) return;
    var z = x * 2.24, g;
    if (x < 702) g = leftGreen.some(function (k) { return Math.abs(k - z) < 14; });
    else g = x > 1040 || (x > 930 && x < 960);
    s += arrow(x, at(arrowTop, x), !g, g ? '#00a820' : '#ff0000');
  });
  [[83, 1345], [123, 1300], [160, 1265], [200, 1220], [236, 1175], [272, 1135], [310, 1095], [352, 1055], [392, 1012], [428, 965], [468, 930], [506, 915], [546, 903], [582, 895], [620, 860], [660, 805], [698, 738], [738, 670], [772, 630], [815, 585], [850, 527], [890, 480], [932, 422], [968, 385], [1008, 372], [1046, 362], [1160, 366]].forEach(function (a) {
    var p = Zm(a[0], a[1]); s += arrow(p[0], p[1], true, '#ff0000');
  });
  [[1082, 365], [1120, 365], [1203, 385], [1240, 425], [1278, 475], [1315, 535], [1355, 590], [1390, 635]].forEach(function (a) {
    var p = Zm(a[0], a[1]); s += arrow(p[0], p[1], false, '#00a820');
  });

  /* tags */
  s += rc(0, 600, 17, 19, '#007a30') + txt(8, 616, '威', 'tag tag-w');
  s += rc(843, 602, 16, 16, '#002878') + txt(851, 616, '财', 'tag tag-c');
  s += rc(1540, 602, 16, 16, '#8a0000') + txt(1548, 616, '涨', 'tag tag-w');
  s += rc(1605, 602, 45, 16, '#7a3000') + txt(1628, 616, '榜跌预', 'tag tag-o');

  /* axis */
  s += vl(1710, 67, 622, '#a00000', 1.5);
  [[9, 166], [8.5, 207], [8, 248], [7.5, 290], [7, 331], [6.5, 371], [6, 412], [5.5, 453], [5, 494], [4.5, 535], [4, 576]].forEach(function (a) {
    s += hl(1710, 1720, a[1], '#a00000', 1.5) + txt(1779, a[1] + 6, a[0].toFixed(2), 'ax');
  });
  document.getElementById('svg-main').innerHTML = s;

  /* ---------- sub pane 1 ---------- */
  s = '';
  s += grid(0, 537, 707) + grid(1621, 1707, 707) + grid(0, 1707, 769) + grid(0, 1707, 832) + grid(1672, 1707, 893) + grid(0, 1707, 957);
  s += rc(5, 883, 1425, 20, '#686868');

  s += ar(M(Z10, [[8, 1105], [335, 1105], [338, 1112], [1210, 1112]]), M(Z10, [[8, 1170], [50, 1172], [120, 1185], [190, 1192], [470, 1192], [500, 1185], [540, 1180], [600, 1160], [640, 1150], [800, 1130], [900, 1125], [1100, 1130], [1210, 1120]]), '#009898');
  s += ar(M(Z10, [[8, 1147], [135, 1147], [135, 1152], [240, 1152], [240, 1156], [340, 1156], [340, 1160], [500, 1165]]), M(Z10, [[8, 1168], [50, 1168], [100, 1175], [120, 1180], [190, 1186], [370, 1186], [370, 1188], [470, 1188], [500, 1178]]), '#006a10');
  s += ar(M(Z10, [[610, 1160], [640, 1150], [800, 1130], [900, 1125], [1100, 1130], [1210, 1120], [1260, 1115], [1300, 1105], [1450, 1098], [1568, 1098]]), M(Z10, [[610, 1165], [740, 1168], [860, 1165], [960, 1157], [1200, 1150], [1320, 1145], [1460, 1135], [1568, 1128]]), '#961e1e');
  var redTop = M(Z7, [[0, 1105], [160, 1090], [230, 1065], [350, 1025], [430, 1005], [580, 965], [660, 925], [720, 860], [780, 830], [850, 805], [960, 760], [1040, 725], [1130, 695], [1170, 683], [1290, 690], [1395, 700]]);
  var oraLowTop = M(Z7, [[0, 1125], [140, 1125], [290, 1117], [450, 1103], [600, 1088], [800, 1055], [1000, 1015], [1200, 960], [1395, 920]]);
  s += ar(redTop, oraLowTop, '#961e1e');
  s += ar(M(Z7, [[0, 1095], [100, 1085], [160, 1070], [230, 1050], [350, 1010], [430, 985], [580, 950], [660, 920], [720, 800], [776, 770], [850, 720], [960, 655], [1040, 620], [1130, 580], [1180, 568], [1290, 590], [1395, 630]]), redTop, '#c46400');
  s += ar(M(Z7, [[450, 1103], [600, 1088], [800, 1055], [1000, 1015], [1200, 960], [1395, 920]]), M(Z7, [[450, 1105], [600, 1105], [640, 1095], [900, 1092], [1100, 1085], [1145, 1078], [1395, 1075]]), '#c46400');

  /* band details on the left */
  [[10, 800], [25, 805], [225, 805], [243, 803], [260, 798], [278, 795], [292, 797], [310, 800], [330, 808], [430, 805], [445, 800], [462, 792], [478, 785], [495, 782], [513, 778], [530, 778], [547, 772], [563, 778], [580, 768], [597, 760], [613, 755], [630, 760], [646, 755], [663, 768], [680, 765], [697, 778], [714, 786], [730, 800], [748, 796], [763, 800], [848, 805], [865, 792], [880, 790], [898, 800], [1133, 795], [1150, 792], [1167, 782], [1185, 768], [1201, 762], [1218, 760], [1234, 760], [1251, 737], [1269, 737], [1285, 747], [1302, 760], [1318, 764], [1335, 790], [1352, 805]].forEach(function (r) {
    var p = Z10(r[0], r[1]); s += vl(p[0], p[1], 890.5, '#e01010', 1.4);
  });
  [[58, 828], [75, 828], [92, 830], [110, 835], [127, 848], [143, 838], [160, 828], [175, 820], [193, 820], [330, 818], [343, 822], [378, 820], [780, 822], [798, 824], [814, 836], [832, 850], [930, 822], [950, 836], [965, 838], [982, 826], [998, 820], [1017, 824], [1034, 828], [1050, 838], [1067, 840], [1083, 862], [1101, 848], [1117, 820], [1370, 820], [1385, 822], [1402, 822], [1420, 824], [1437, 834], [1453, 846], [1469, 848], [1487, 832], [1504, 832], [1553, 832]].forEach(function (r) {
    var p = Z10(r[0], r[1]); s += vl(p[0], 890, p[1], '#30d8e0', 1.4);
  });
  s += rc(1161, 883, 4, 20, '#f8f8f8');
  s += rc(3, 900, 295, 2, '#30e030') + rc(75, 900, 42, 2.4, '#30f030') + rc(42, 899, 46, 3, '#ff0000');
  s += rc(800, 900, 33, 3, '#ff0000') + rc(833, 900, 32, 3, '#20e020') + rc(865, 900, 192, 2, '#40c040');

  /* dashes along the band foot */
  bars.forEach(function (x) {
    var z = x * 1.307;
    if (x < 1200) {
      if (z < 590) {
        if (z > 100 && z < 285) s += hollow(x - 5, 903, 10, 4.5, '#009a10', 1);
        else s += rc(x - 5, 903, 10, 3, '#008a10');
      } else if (z < 640) s += rc(x - 6, 903, 13, 1.5, '#006010');
      else s += rc(x - 5.5, 902.5, 11, (z > 858 && z < 940) || z > 1210 ? 3 : 2, '#e09000');
    }
  });

  /* coloured bars, left */
  var barT = M(Z10, [[495, 1178], [545, 1168], [612, 1148], [680, 1128], [780, 1125], [815, 1130], [865, 1122], [950, 1125], [1065, 1132], [1115, 1135], [1185, 1125], [1235, 1105], [1285, 1088], [1335, 1078], [1437, 1085], [1450, 1090], [1568, 1095]]);
  var barB = M(Z10, [[495, 1183], [545, 1178], [612, 1170], [680, 1155], [780, 1148], [815, 1145], [865, 1142], [950, 1138], [1065, 1143], [1115, 1142], [1185, 1138], [1235, 1128], [1285, 1118], [1335, 1112], [1437, 1105], [1450, 1105], [1568, 1105]]);
  bars.forEach(function (x) {
    var z = x * 1.307;
    if (x > 1198 || z < 490) return;
    var mag = (z > 805 && z < 908) || (z > 925 && z < 1075) || (z > 1105 && z < 1175) || z > 1445;
    var t = at(barT, x), b = at(barB, x);
    s += rc(x - 3.5, t, 7, Math.max(2, b - t), mag ? '#ff00ff' : '#ffff00');
  });

  /* right part, from the detailed reading */
  var ybars = [[200, 1012, 1070], [236, 985, 1057], [277, 962, 1043], [313, 944, 1034], [353, 931, 1025], [393, 917, 1016], [430, 895, 1002], [470, 885, 993], [506, 885, 985], [546, 872, 975], [583, 850, 962], [623, 814, 944], [663, 765, 922], [699, 715, 890], [740, 670, 867], [776, 652, 840], [817, 629, 831], [852, 598, 809], [893, 589, 795], [933, 562, 773], [969, 548, 759], [1010, 544, 745], [1046, 517, 727], [1087, 503, 710], [1122, 485, 696], [1163, 485, 683], [1203, 503, 683]];
  var mbars = [[5, 1097, 1107], [42, 1095, 1106], [83, 1090, 1100], [123, 1071, 1097], [160, 1048, 1088], [1239, 526, 683], [1280, 562, 692], [1316, 589, 696], [1357, 620, 705], [1393, 647, 710]];
  ybars.forEach(function (b) { var p = Z7(b[0], b[1]), q = Z7(b[0], b[2]); s += rc(p[0] - 3.7, p[1], 7.5, q[1] - p[1], '#ffff00'); });
  mbars.forEach(function (b) { var p = Z7(b[0], b[1]), q = Z7(b[0], b[2]); s += rc(p[0] - 3.7, p[1], 7.5, q[1] - p[1], '#ff00ff'); });
  [[83, 788], [123, 725], [160, 643], [200, 553], [236, 530], [277, 548], [313, 590], [353, 622], [393, 635], [430, 630], [470, 680], [506, 733], [546, 733], [583, 675], [623, 585], [663, 473], [699, 395], [740, 395], [776, 487], [817, 527], [852, 535], [893, 635], [933, 616], [969, 657], [1010, 716], [1046, 675], [1087, 693], [1122, 693], [1163, 762]].forEach(function (r) {
    var p = Z7(r[0], r[1]); s += vl(p[0], p[1], Z7(0, 812)[1], '#e01010', 1.4);
  });
  [[1203, 885], [1239, 993], [1280, 1105], [1316, 1138], [1357, 1155], [1392, 1150]].forEach(function (r) {
    var p = Z7(r[0], r[1]); s += vl(p[0], Z7(0, 810)[1], p[1], '#18d0d8', 1.4);
  });
  [[160, 0], [200, 0], [236, 0], [277, 0], [313, 0], [353, 0], [393, 0], [430, 0], [470, 0], [506, 0], [546, 0], [583, 0], [623, 0], [663, 0], [699, 0], [740, 0], [776, 0], [817, 0], [852, 0], [893, 0], [933, 0], [969, 0], [1010, 0], [1046, 0], [1087, 0], [1122, 0], [1163, 0], [1203, 0], [1239, 1], [1280, 1], [1357, 1], [1393, 1]].forEach(function (b) {
    var p = Z7(b[0], b[1] ? 842 : 839); s += hollow(p[0] - 4.5, p[1], 9, 3.5, '#e09000', 1.3);
  });
  [0, 40, 80, 120].forEach(function (z) { var p = Z7(z, 848); s += rc(p[0], p[1], 10, 2, '#e09000'); });

  /* tiny dots */
  var dots = [];
  bars.forEach(function (x) {
    var z = x * 1.307;
    if (x < 952) dots.push([x, 960]);
    else if (x < 1200) dots.push([x, 955]);
    if (x < 1200) dots.push([x, 620 + (z < 500 ? 1146 + z * 0.02 : 1155 - (z - 500) * 0.01) / 3]);
    else {
      var q = at(M(Z7, [[0, 1140], [300, 1130], [600, 1112], [900, 1082], [1200, 1032], [1393, 1010]]), x);
      dots.push([x, q]);
    }
  });
  M(Z7, [[1280, 105], [1316, 105], [1357, 105], [1393, 105], [236, 636], [277, 636], [313, 636], [353, 636], [393, 636], [470, 636], [506, 636], [546, 636], [583, 636], [623, 510], [200, 730], [123, 942], [83, 995], [5, 1005], [42, 1005]]).forEach(function (d) { dots.push(d); });
  dots.forEach(function (d) { s += rc(d[0] - 0.8, d[1] - 0.8, 2, 2, '#d0d0d0'); });

  /* markers */
  s += '<ellipse cx="467" cy="1020" rx="9" ry="9.500" fill="#e83838"/><path d="M460 1024 L470 1013 L468 1019 L474 1018 L463 1027 L466 1021Z" fill="#fff"/>';
  s += arrow(970, 959, true, '#ff1010');
  s += '<polygon points="1621,899 1623,904 1628,904 1624,907 1626,912 1621,909 1616,912 1618,907 1614,904 1619,904" fill="#fff"/>';
  s += '<text x="1624" y="912" font-size="18" fill="#fff">逆</text>';

  s += vl(1710.5, 622, 1030, '#b00000', 3) + vl(1785.5, 622, 1030, '#b00000', 3);
  [[10, 645], [9, 707], [7, 832], [6, 893], [5, 957]].forEach(function (a) {
    s += txt(1779, a[1] + 6, a[0].toFixed(2), 'ax');
  });
  [645, 676, 707, 738, 769, 800, 832, 862, 893, 925, 957, 988, 1018].forEach(function (y, n) { s += hl(1711, n % 2 ? 1716 : 1722, y, '#a00000', 1.5); });
  document.getElementById('svg-sub1').innerHTML = s;

  /* ---------- sub pane 2 ---------- */
  s = '';
  s += grid(1000, 1710, 1062);
  var leftY = [], leftR = [];
  bars.forEach(function (x) {
    if (x > 1197) return;
    var big = x > 450 && x < 560 ? 1.6 : (x > 880 && x < 1040 ? 1.4 : 1);
    var v = rnd() * 6 * big;
    leftY.push([x, 1148 - v]);
    var w = (x > 700 && x < 810) ? 3 : (x > 1040 ? 2 : 0);
    leftR.push([x, 1148 - v + 2.5 + rnd() * 2.5 + w]);
  });
  s += hl(5, 1664, 1149, '#b8b8b8', 1.5) + hl(1664, 1710, 1149, '#b00000', 1.5, '2 4.5');
  var yz = [[0, 333], [40, 328], [75, 240], [108, 216], [140, 235], [175, 225], [205, 260], [240, 260], [272, 352], [310, 280], [340, 215], [372, 97], [400, 140], [440, 235], [475, 288], [540, 288], [580, 355], [645, 352], [675, 220], [712, 218], [742, 90], [778, 225], [812, 115], [845, 248], [880, 135], [910, 198], [945, 198], [978, 160], [1012, 210], [1048, 210], [1080, 352]];
  var rz = [[0, 345], [35, 335], [75, 240], [108, 216], [138, 382], [175, 372], [205, 588], [240, 562], [272, 745], [310, 470], [340, 300], [372, 97], [405, 230], [440, 380], [475, 435], [510, 350], [540, 288], [575, 350], [610, 560], [645, 745], [675, 605], [712, 578], [742, 260], [778, 530], [812, 250], [845, 535], [880, 293], [910, 350], [945, 388], [978, 350], [1012, 513], [1048, 428], [1080, 652], [1112, 632], [1145, 597], [1180, 578], [1212, 535]];
  s += pl(leftR.concat(M(Z11, rz)), '#f01010', 1.3);
  s += pl(leftY.concat(M(Z11, yz.slice(0, 17))), '#e8e000', 1.4);
  s += pl(M(Z11, yz.slice(17)), '#e8e000', 1.4);
  s += vl(1710, 1030, 1282, '#a00000', 1.5);
  s += hl(1710, 1720, 1062, '#a00000', 1.5) + hl(1710, 1716, 1106, '#a00000', 1.5) + hl(1710, 1720, 1149, '#a00000', 1.5);
  s += txt(1779, 1069, '50000', 'ax') + txt(1779, 1113, '25000', 'ax') + txt(1779, 1155, '0', 'ax');
  document.getElementById('svg-sub2').innerHTML = s;

  /* ---------- time axis ---------- */
  s = '';
  [[7, '2021年'], [110, '8'], [393, '9'], [856, '11'], [1138, '12'], [1434, '1']].forEach(function (t) { s += txt(t[0], 1302, t[1], 'tm'); });
  [107, 390, 853, 1135, 1431].forEach(function (x) { s += vl(x, 1283, 1305, '#a00000', 1); });
  [178, 250, 320, 460, 520, 680, 735, 800, 930, 1000, 1065, 1210, 1285, 1360, 1500, 1570, 1640].forEach(function (x) { s += vl(x, 1283, 1287, '#a00000', 1); });
  s += rc(620, 1283, 117, 22, '#000080') + txt(622, 1301, '2021/09/29/三', 'tm-sel');
  s += vl(1710, 1283, 1305, '#a00000', 1.5);
  s += txt(1729, 1302, '日线', 'tm-day');
  document.getElementById('svg-time').innerHTML = s;
})();
```
